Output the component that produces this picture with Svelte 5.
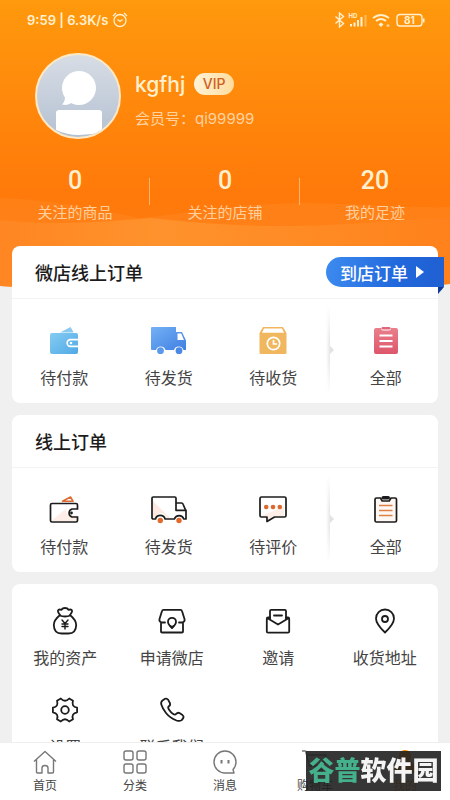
<script lang="ts">
  interface Entry {
    icon: string;
    label: string;
  }

  const stats = [
    { value: 0, label: "关注的商品" },
    { value: 0, label: "关注的店铺" },
    { value: 20, label: "我的足迹" },
  ];

  const shopOrders: Entry[] = [
    { icon: "wallet-fill", label: "待付款" },
    { icon: "truck-fill", label: "待发货" },
    { icon: "box-fill", label: "待收货" },
  ];

  const onlineOrders: Entry[] = [
    { icon: "wallet", label: "待付款" },
    { icon: "truck", label: "待发货" },
    { icon: "comment", label: "待评价" },
  ];

  const services: Entry[] = [
    { icon: "money", label: "我的资产" },
    { icon: "store", label: "申请微店" },
    { icon: "invite", label: "邀请" },
    { icon: "pin", label: "收货地址" },
    { icon: "gear", label: "设置" },
    { icon: "phone", label: "联系我们" },
  ];

  const tabs: Entry[] = [
    { icon: "home", label: "首页" },
    { icon: "grid", label: "分类" },
    { icon: "message", label: "消息" },
    { icon: "cart", label: "购物车" },
    { icon: "me", label: "我的" },
  ];

  let activeTab = $state("me");
</script>

{#snippet orderIcon(name: string)}
  <svg class="icon" viewBox="0 0 36 30" width="36" height="30" aria-hidden="true">
    {#if name === "wallet-fill"}
      <path d="M14 6.5 24.500 1l3.200 5.500z" fill="#8cc9ef" />
      <path d="M6 7h24q2 0 2 2v5h-6.500a3.200 3.200 0 0 0 0 6.400H32V26q0 2-2 2H6q-2 0-2-2V9q0-2 2-2z" fill="url(#sky)" />
      <path d="M32.500 12.800h-8a4.200 4.200 0 0 0 0 8.400h8z" fill="#fff" />
      <path d="M32 14.500h-7.500a2.500 2.500 0 0 0 0 5H32z" fill="#5fb4ea" />
      <circle cx="25" cy="17" r="1.300" fill="#fff" />
    {:else if name === "truck-fill"}
      <path d="M1 1h24v5h6l4 8.500V24h-2.500a5 5 0 0 0-9.500 0h-8.500a5 5 0 0 0-9.500 0H1q-1 0-1-1V2q0-1 1-1z" fill="url(#blue)" />
      <path d="M26.500 7.500h3.700l2.800 6.500h-6.500z" fill="#fff" />
      <circle cx="9.500" cy="24.700" r="3.400" fill="#5a99ec" />
      <circle cx="28" cy="24.700" r="3.400" fill="#4a89e6" />
    {:else if name === "box-fill"}
      <path d="M8 1h20l3.500 6v19.500q0 1.500-1.500 1.500H6q-1.500 0-1.500-1.500V7z" fill="#f0b75e" />
      <path d="M9 2.500h18l2 4.200H7z" fill="#fff" />
      <circle cx="18.500" cy="17.500" r="6.200" fill="none" stroke="#fff" stroke-width="1.700" />
      <path d="M18.500 14v4h3.600" fill="none" stroke="#fff" stroke-width="1.700" />
    {:else if name === "list-fill"}
      <path d="M8 2h5q0 2.500 2 2.500h6q2 0 2-2.500h5q2 0 2 2v22q0 2-2 2H8q-2 0-2-2V4q0-2 2-2z" fill="url(#rose)" />
      <rect x="13.500" y="1" width="9" height="2.600" rx="1.300" fill="#e0667a" />
      <path d="M11.500 9.500h13M11.500 15h13M11.500 20.500h13" stroke="#fff" stroke-width="1.800" />
    {:else if name === "wallet"}
      <path d="M5 26 21 13q-3 5 3 7.500h7V26z" fill="#fdeee7" />
      <path d="M16.500 6.200 24.500 2l2.500 4.200z" fill="none" stroke="#dd6b33" stroke-width="1.600" stroke-linejoin="round" />
      <path d="M31.500 14V10q0-1.500-1.500-1.500H6Q4.500 8.500 4.500 10v15.500Q4.500 27 6 27h24q1.500 0 1.500-1.500V22H26a4.200 4.200 0 0 1 0-8z" fill="none" stroke="#1c1c1c" stroke-width="1.700" />
      <circle cx="25.500" cy="18" r="1.400" fill="#1c1c1c" />
    {:else if name === "truck"}
      <path d="M2 6 19 23h-4a5 5 0 0 0-10 0H2z" fill="#fde9e1" />
      <path d="M4.500 24H2.300Q1 24 1 22.700V3.300Q1 2 2.300 2h21.500Q25 2 25 3.300v12h10V24h-2.200a5 5 0 0 0-9.400 0h-9.300a5 5 0 0 0-9.600 0z" fill="none" stroke="#1c1c1c" stroke-width="1.700" stroke-linejoin="round" />
      <path d="M25 8h5.500q1.200 0 1.700 1.500l2.500 6" fill="none" stroke="#1c1c1c" stroke-width="1.700" />
      <circle cx="9.300" cy="25.500" r="2.700" fill="#e26a2c" />
      <circle cx="28" cy="25.500" r="2.700" fill="#e26a2c" />
    {:else if name === "comment"}
      <path d="m7 21 22-10v10H19l-7 5v-5z" fill="#fdeee7" />
      <path d="M6.500 2h23Q31 2 31 3.500v17q0 1.500-1.500 1.500h-10L12 26.500V22H6.500Q5 22 5 20.500v-17Q5 2 6.500 2z" fill="none" stroke="#1c1c1c" stroke-width="1.700" stroke-linejoin="round" />
      <circle cx="11.200" cy="12" r="2.300" fill="#dc6a2e" />
      <circle cx="18" cy="12" r="2.300" fill="#dc6a2e" />
      <circle cx="24.800" cy="12" r="2.300" fill="#dc6a2e" />
    {:else if name === "list"}
      <path d="M12.500 3h-4Q7 3 7 4.500v21Q7 27 8.500 27H27q1.500 0 1.500-1.500v-21Q28.500 3 27 3h-4l-1.800 3h-7z" fill="#fff7f3" stroke="#1c1c1c" stroke-width="1.700" stroke-linejoin="round" />
      <rect x="13.500" y="1" width="8.500" height="3.600" rx="1.800" fill="#1c1c1c" />
      <path d="M11 10.500h13.500M11 15.500h13.500M11 20.500h13.500" stroke="#dd8048" stroke-width="1.500" />
    {/if}
  </svg>
{/snippet}

{#snippet serviceIcon(name: string)}
  <svg class="icon line" viewBox="0 0 30 30" width="30" height="30" aria-hidden="true">
    {#if name === "money"}
      <path d="M10.500 9.500Q7.500 6 8 4.500t3.500-.7Q12.500 2 15 2t3.500 1.800Q21.500 3 22 4.500t-2.500 5M9.500 9.500q5.500 2 11 0Q26 14 26.200 19 26 27.500 18.500 27.500h-7Q4 27.500 3.800 19 4 14 9.500 9.500z" />
      <path class="thin" d="m12 14 3 3.500 3-3.500M15 17.500V23M12 18h6M12 20.500h6" />
    {:else if name === "store"}
      <path d="M4 17.500v8q0 1 1 1h20q1 0 1-1v-8" />
      <path d="M8 16.500H4.500Q1.800 15.500 2.500 13L5 5q.3-1.200 1.500-1.200h17Q24.700 3.800 25 5l2.500 8q.7 2.500-2 3.500H22" />
      <path d="M15 22q-4-3.400-4-6.200a4 4 0 0 1 8 0Q19 18.600 15 22z" />
      <path d="m13.500 20 1.500 1.500 1.500-1.500" />
    {:else if name === "invite"}
      <path d="M7 13V5q0-1.200 1.200-1.200h13.600Q23 3.800 23 5v8M11 9.500h8" />
      <path d="M7 11.500H5q-1.200 0-1.200 1.200v12.800q0 1.200 1.200 1.200h20q1.200 0 1.200-1.200V12.700q0-1.200-1.200-1.200h-2M5 12.500l10 6 10-6" />
    {:else if name === "pin"}
      <path d="M15 26.500Q6 18 6 12.500a9 9 0 0 1 18 0q0 5.500-9 14z" />
      <circle cx="15" cy="13" r="3" />
    {:else if name === "gear"}
      <path transform="translate(15 15)" d="M12.100-2.300V2.300Q6 3.500 8 9.300L4.200 11.500Q0 7 -4.200 11.500L-8 9.300Q-6 3.500-12.100 2.300V-2.300Q-6-3.500-8-9.300L-4.200-11.500Q0-7 4.200-11.500L8-9.300Q6-3.500 12.100-2.300z" />
      <circle cx="15" cy="15" r="3.800" />
    {:else if name === "phone"}
      <path d="M5.500 5.500 8 3.800q1.800-.8 3.200 1l1.700 3.200q.8 2-1 3.300-1.400 1 0 3.200 2 3 4.300 4.600 1.800 1.200 3-.2 1.500-1.800 3.300-.8l3 2q1.600 1.200.7 3l-1.500 2q-2 1.500-5.200.4Q12.500 22.500 9 18 5.500 13.500 4.300 9.500q-.7-2.500 1.200-4z" />
    {/if}
  </svg>
{/snippet}

{#snippet tabIcon(name: string)}
  <svg class="icon tab" viewBox="0 0 26 26" width="26" height="26" aria-hidden="true">
    {#if name === "home"}
      <path d="M2 12.500 13 2.500l11 10M4.500 10.500V23q0 1 1 1H10v-5q0-2.500 3-2.500t3 2.500v5h4.500q1 0 1-1V10.500" />
    {:else if name === "grid"}
      <rect x="2" y="2" width="9" height="9" rx="2" />
      <rect x="15" y="2" width="9" height="9" rx="2" />
      <rect x="2" y="15" width="9" height="9" rx="2" />
      <rect x="15" y="15" width="9" height="9" rx="2" />
    {:else if name === "message"}
      <path d="M13 24A11 11 0 1 1 24 13q0 4.500-3 7.500l1 3.500z" />
      <path class="eyes" d="M9.500 11v3.500M16.500 11v3.500" />
    {:else if name === "cart"}
      <path d="M0 2h3.500l4 15H21l3-11H5" />
      <circle cx="9" cy="22" r="1.500" />
      <circle cx="19" cy="22" r="1.500" />
    {:else}
      <path d="M13 1a6 6 0 0 1 4 10.500q7 2.500 7 12.500H2Q2 14 9 11.500A6 6 0 0 1 13 1z" fill="#ff8a00" stroke="none" />
    {/if}
  </svg>
{/snippet}

{#snippet orderRow(items: Entry[], allIcon: string)}
  <div class="orders">
    {#each items as item}
      <button class="entry">
        {@render orderIcon(item.icon)}
        <span>{item.label}</span>
      </button>
    {/each}
    <div class="divider"></div>
    <button class="entry">
      {@render orderIcon(allIcon)}
      <span>全部</span>
    </button>
  </div>
{/snippet}

<!-- shared gradients -->
<svg class="defs" width="0" height="0" aria-hidden="true">
  <defs>
    <linearGradient id="sky" x1="0" y1="0" x2="1" y2="1">
      <stop offset="0" stop-color="#86ccf2" />
      <stop offset="1" stop-color="#4fa9e6" />
    </linearGradient>
    <linearGradient id="blue" x1="0" y1="0" x2="1" y2="1">
      <stop offset="0" stop-color="#74b1f5" />
      <stop offset="1" stop-color="#3f7fe2" />
    </linearGradient>
    <linearGradient id="rose" x1="0" y1="0" x2="0" y2="1">
      <stop offset="0" stop-color="#ea7f8c" />
      <stop offset="1" stop-color="#dd566b" />
    </linearGradient>
  </defs>
</svg>

<div class="app">
  <main>
    <header>
      <svg class="backdrop" viewBox="0 0 450 292" preserveAspectRatio="none" aria-hidden="true">
        <defs>
          <linearGradient id="orange" x1="0" y1="0" x2="0" y2="1">
            <stop offset="0" stop-color="#ff990d" />
            <stop offset="0.65" stop-color="#ff7a0a" />
            <stop offset="1" stop-color="#ff7a12" />
          </linearGradient>
          <linearGradient id="wave" x1="0" y1="0" x2="1" y2="0">
            <stop offset="0" stop-color="#ff8622" />
            <stop offset="0.35" stop-color="#ff922c" />
            <stop offset="0.7" stop-color="#ff8a24" />
            <stop offset="1" stop-color="#ff811b" />
          </linearGradient>
        </defs>
        <path d="M0 0h450v284q-112 8-225 8T0 286z" fill="url(#orange)" />
        <path d="M0 198c50 1 90 10 140 20 60-6 90-14 160-15 60 0 100 5 150 4v77q-112 8-225 8T0 286z" fill="#ff8620" opacity="0.500" />
        <path d="M0 220c60 6 100 2 150-2 40 4 80 8 130 8 70 0 110-6 170-8v66q-112 8-225 8T0 286z" fill="url(#wave)" />
      </svg>

      <div class="header-content">
        <div class="status-bar">
          <span>9:59 | 6.3K/s</span>
          <svg viewBox="0 0 16 16" width="16" height="16" aria-hidden="true">
            <g fill="none" stroke="#fff0cf" stroke-width="1.300">
              <circle cx="8" cy="8.500" r="6" />
              <path d="M1 4 4 1M15 4l-3-3M5.500 7.500 8 9.500l2.500-2" />
            </g>
          </svg>
          <span class="spacer"></span>
          <svg viewBox="0 0 92 16" width="92" height="16" aria-hidden="true">
            <g fill="none" stroke="#fff0cf" stroke-width="1.400">
              <path d="m1.500 4.500 8 7L5.500 15V1l4 3.500-8 7" />
              <path d="M39 6q8-6 16 0M42 9q5-4 10 0" stroke-width="1.800" />
              <rect x="63" y="2.500" width="25" height="11.500" rx="3" />
            </g>
            <g fill="#fff0cf">
              <path d="M16 12h2v2.500h-2zM19.500 10.500h2v4h-2zM23 8h2v6.500h-2zM26.500 5h2v9.500h-2zM44.500 12.500 47 10.500l2.500 2-2.500 2.500zM89 6.500h1.500v4H89z" />
              <path d="M30.500 3h2v11.500h-2z" opacity="0.400" />
              <circle cx="54" cy="13.500" r="1.500" opacity="0.600" />
              <text x="14.500" y="6" font-size="6" font-weight="700">HD</text>
              <text x="70" y="12" font-size="10" font-weight="700">81</text>
            </g>
          </svg>
        </div>

        <div class="profile">
          <svg class="avatar" viewBox="0 0 86 86" width="86" height="86" role="img" aria-label="头像">
            <defs>
              <linearGradient id="face" x1="0" y1="0" x2="0" y2="1">
                <stop offset="0" stop-color="#d8dde5" />
                <stop offset="1" stop-color="#b4c1d2" />
              </linearGradient>
              <clipPath id="round"><circle cx="43" cy="43" r="41" /></clipPath>
            </defs>
            <circle cx="43" cy="43" r="42" fill="url(#face)" stroke="#ffe9c4" stroke-width="2" />
            <g fill="#fff" clip-path="url(#round)">
              <circle cx="44" cy="35" r="17" />
              <path d="M30 44q0 5-3 7.500 6 1.500 10-2z" />
              <path d="M24 57h40q3 0 3 3v19q-11 3-23 3t-23-5V60q0-3 3-3z" />
            </g>
          </svg>
          <div class="who">
            <div class="name-row">
              <span class="name">kgfhj</span>
              <span class="vip">VIP</span>
            </div>
            <span class="member">会员号：qi99999</span>
          </div>
        </div>

        <div class="stats">
          {#each stats as stat}
            <button class="stat">
              <span class="value">{stat.value}</span>
              <span class="stat-label">{stat.label}</span>
            </button>
          {/each}
        </div>
      </div>
    </header>

    <div class="cards">
      <section class="card">
        <div class="card-head">
          <h2>微店线上订单</h2>
          <button class="ribbon">
            到店订单
            <svg viewBox="0 0 8 12" width="8" height="12" aria-hidden="true"><path d="m0 0 8 6-8 6z" fill="#fff" /></svg>
          </button>
        </div>
        {@render orderRow(shopOrders, "list-fill")}
      </section>

      <section class="card">
        <div class="card-head">
          <h2>线上订单</h2>
        </div>
        {@render orderRow(onlineOrders, "list")}
      </section>

      <section class="card services">
        {#each services as item}
          <button class="entry">
            {@render serviceIcon(item.icon)}
            <span>{item.label}</span>
          </button>
        {/each}
      </section>
    </div>
  </main>

  <nav>
    {#each tabs as tab}
      <button class="tab-btn" class:active={activeTab === tab.icon} onclick={() => (activeTab = tab.icon)}>
        {@render tabIcon(tab.icon)}
        <span>{tab.label}</span>
      </button>
    {/each}
  </nav>

  <div class="watermark"><span>谷普</span>软件园</div>
</div>

<style>
  :global(body) {
    background: #f0f0f0;
  }

  .app {
    display: flex;
    flex-direction: column;
    height: 100vh;
    font-family: Inter, "Noto Sans CJK SC", sans-serif;
    color: #1c1c1c;
  }

  .defs {
    position: absolute;
  }

  main {
    flex: 1;
    min-height: 0;
    overflow-y: auto;
    scrollbar-width: none;
  }

  button {
    padding: 0;
    border: none;
    background: none;
    font-family: inherit;
    color: inherit;
    cursor: pointer;
  }

  svg {
    display: block;
    flex-shrink: 0;
  }

  header {
    display: grid;
    color: #fff0cf;
  }

  .backdrop,
  .header-content {
    grid-area: 1 / 1;
    min-width: 0;
  }

  .backdrop {
    width: 100%;
    height: 100%;
  }

  .header-content {
    z-index: 1;
    padding-bottom: 68px;
  }

  .status-bar {
    display: flex;
    align-items: center;
    gap: 4px;
    height: 40px;
    padding: 0 24px 0 27px;
    font-size: 13px;
    font-weight: 600;
  }

  .spacer {
    flex: 1;
  }

  .profile {
    display: flex;
    gap: 14px;
    padding: 13px 35px 0;
  }

  .who {
    padding-top: 17px;
  }

  .name-row {
    display: flex;
    align-items: center;
    gap: 9px;
    height: 28px;
  }

  .name {
    font-size: 21px;
    font-weight: 500;
  }

  .vip {
    width: 40px;
    border-radius: 11px;
    background: linear-gradient(90deg, #fff3d8, #ffdc9c);
    color: #cf5f1e;
    font-size: 14px;
    font-weight: 500;
    line-height: 22px;
    text-align: center;
  }

  .member {
    display: block;
    margin-top: 10px;
    color: #ffd2a0;
    font-size: 15px;
    line-height: 22px;
  }

  .stats {
    display: grid;
    grid-template-columns: repeat(3, 1fr);
    margin-top: 29px;
  }

  .stat {
    display: flex;
    flex-direction: column;
    align-items: center;
    gap: 8px;
    background: linear-gradient(#ffb46c, #ffb46c) right 10px / 1px 27px no-repeat;
  }

  .stat:last-child {
    background: none;
  }

  .value {
    color: #fff0cf;
    font-family: Roboto, sans-serif;
    font-size: 25px;
    font-weight: 500;
    line-height: 26px;
  }

  .stat-label {
    color: #ffcf9e;
    font-size: 15px;
    line-height: 22px;
  }

  .cards {
    position: relative;
    display: flex;
    flex-direction: column;
    gap: 12px;
    margin-top: -46px;
    padding: 0 12px 12px;
  }

  .card {
    border-radius: 8px;
    background: #fff;
  }

  .card-head {
    display: flex;
    align-items: center;
    justify-content: space-between;
    box-sizing: border-box;
    height: 53px;
    padding-left: 23px;
    border-bottom: 1px solid #f3f3f3;
  }

  h2 {
    margin: 0;
    font-size: 18px;
    font-weight: 500;
  }

  .ribbon {
    position: relative;
    display: flex;
    align-items: center;
    gap: 8px;
    height: 30px;
    margin-right: -6px;
    padding: 0 20px 0 14px;
    border-radius: 15px 0 0 15px;
    background: linear-gradient(100deg, #3d8bf0, #2168dc 60%, #1f5fd2);
    color: #fff;
    font-size: 17px;
    font-weight: 500;
  }

  .ribbon::after {
    content: "";
    position: absolute;
    top: 100%;
    right: 0;
    border-top: 7px solid #0d3a94;
    border-right: 6px solid transparent;
  }

  .orders {
    display: grid;
    grid-template-columns: repeat(3, 1fr) 8px 1fr;
    padding: 27px 0 13px;
  }

  .entry {
    display: flex;
    flex-direction: column;
    align-items: center;
    gap: 10px;
    color: #444;
    font-size: 16px;
    line-height: 24px;
  }

  .line {
    fill: none;
    stroke: #1c1c1c;
    stroke-width: 1.8;
    stroke-linecap: round;
    stroke-linejoin: round;
  }

  .line .thin {
    stroke-width: 1.4;
  }

  .divider {
    position: relative;
    width: 4px;
    margin: -20px 0 -4px;
    background: linear-gradient(#fff, transparent 40%, transparent 60%, #fff), linear-gradient(90deg, #fff, #e6e6e6);
  }

  .divider::after {
    content: "";
    position: absolute;
    top: 50%;
    left: 100%;
    margin-top: -4px;
    border: 4px solid transparent;
    border-left-color: #e2e2e2;
    border-right: none;
  }

  .services {
    display: grid;
    grid-template-columns: repeat(4, 1fr);
    row-gap: 25px;
    padding: 22px 0 13px;
  }

  nav {
    display: grid;
    grid-template-columns: repeat(5, 1fr);
    box-sizing: border-box;
    height: 58px;
    border-top: 1px solid #eee;
    background: #fff;
  }

  .tab-btn {
    display: flex;
    flex-direction: column;
    align-items: center;
    gap: 2px;
    padding-top: 6px;
    color: #444;
    font-size: 12px;
    line-height: 18px;
  }

  .tab-btn.active {
    color: #ff8a00;
  }

  .tab {
    fill: none;
    stroke: #777;
    stroke-width: 1.4;
    stroke-linejoin: round;
  }

  .tab .eyes {
    stroke-width: 2;
  }

  .watermark {
    position: fixed;
    right: 9px;
    bottom: 9px;
    z-index: 2;
    box-sizing: border-box;
    width: 135px;
    background: rgba(32, 32, 32, 0.9);
    color: #f4f4f4;
    font-size: 26px;
    font-style: oblique 8deg;
    font-weight: 900;
    line-height: 40px;
    text-align: center;
    white-space: nowrap;
    pointer-events: none;
  }

  .watermark span {
    color: #45b08c;
  }
</style>
